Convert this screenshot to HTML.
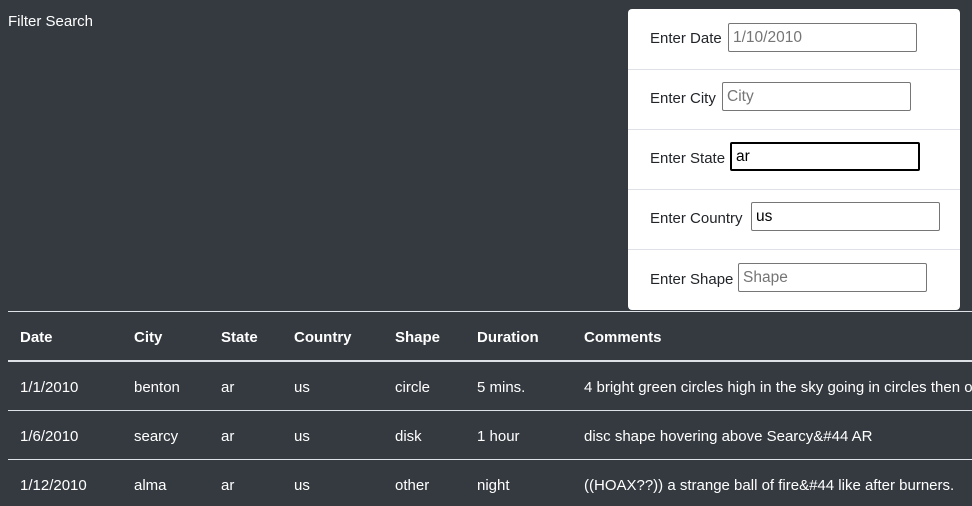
<!DOCTYPE html>
<html><head><meta charset="utf-8"><style>
body{margin:0;width:972px;height:506px;background:#343a40;font-family:"Liberation Sans",sans-serif;font-size:15px;color:#fff;overflow:hidden;position:relative}
.a{position:absolute;white-space:nowrap}
#panel{position:absolute;left:628px;top:9px;width:332px;height:301px;background:#fff;border-radius:4px}
.sep{position:absolute;left:0;width:332px;height:1px;background:#dee2e6}
.lab{position:absolute;left:22px;color:#212529}
.inp{position:absolute;width:186px;height:27px;border:1px solid #767676;border-radius:2px;box-sizing:content-box;color:#757575;line-height:28px;padding-left:4px;font-size:15.5px}
.hl{position:absolute;left:8px;width:964px;background:#dee2e6}
</style></head><body>
<div class="a" style="left:8px;top:13px">Filter Search</div>
<div id="panel">
 <div class="sep" style="top:60px"></div><div class="sep" style="top:120px"></div><div class="sep" style="top:180px"></div><div class="sep" style="top:240px"></div>
 <div class="lab" style="top:21px">Enter Date</div><div class="inp" style="left:100px;top:14px;width:183px">1/10/2010</div>
 <div class="lab" style="top:81px">Enter City</div><div class="inp" style="left:94px;top:73px;width:183px">City</div>
 <div class="lab" style="top:141px">Enter State</div><div class="inp" style="left:102px;top:133px;width:182px;height:25px;border:2px solid #000;color:#000;line-height:26px">ar</div>
 <div class="lab" style="top:201px">Enter Country</div><div class="inp" style="left:123px;top:193px;width:183px;color:#000">us</div>
 <div class="lab" style="top:262px">Enter Shape</div><div class="inp" style="left:110px;top:254px;width:183px">Shape</div>
</div>
<div class="hl" style="top:311px;height:1px"></div>
<div class="hl" style="top:360px;height:2px"></div>
<div class="hl" style="top:410px;height:1px"></div>
<div class="hl" style="top:459px;height:1px"></div>
<div style="font-weight:bold">
<div class="a" style="left:20px;top:329px">Date</div><div class="a" style="left:134px;top:329px">City</div><div class="a" style="left:221px;top:329px">State</div><div class="a" style="left:294px;top:329px">Country</div><div class="a" style="left:395px;top:329px">Shape</div><div class="a" style="left:477px;top:329px">Duration</div><div class="a" style="left:584px;top:329px">Comments</div>
</div>
<div class="a" style="left:20px;top:379px">1/1/2010</div><div class="a" style="left:134px;top:379px">benton</div><div class="a" style="left:221px;top:379px">ar</div><div class="a" style="left:294px;top:379px">us</div><div class="a" style="left:395px;top:379px">circle</div><div class="a" style="left:477px;top:379px">5 mins.</div><div class="a" style="left:584px;top:379px">4 bright green circles high in the sky going in circles then one</div>
<div class="a" style="left:20px;top:428px">1/6/2010</div><div class="a" style="left:134px;top:428px">searcy</div><div class="a" style="left:221px;top:428px">ar</div><div class="a" style="left:294px;top:428px">us</div><div class="a" style="left:395px;top:428px">disk</div><div class="a" style="left:477px;top:428px">1 hour</div><div class="a" style="left:584px;top:428px">disc shape hovering above Searcy&amp;#44 AR</div>
<div class="a" style="left:20px;top:477px">1/12/2010</div><div class="a" style="left:134px;top:477px">alma</div><div class="a" style="left:221px;top:477px">ar</div><div class="a" style="left:294px;top:477px">us</div><div class="a" style="left:395px;top:477px">other</div><div class="a" style="left:477px;top:477px">night</div><div class="a" style="left:584px;top:477px">((HOAX??)) a strange ball of fire&amp;#44 like after burners.</div>
</body></html>
